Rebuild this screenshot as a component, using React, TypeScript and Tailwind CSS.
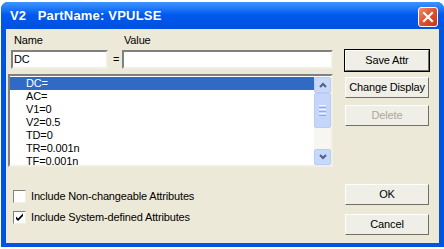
import React from "react";

const rows = ["DC=", "AC=", "V1=0", "V2=0.5", "TD=0", "TR=0.001n", "TF=0.001n"];

function XpButton({ label, isDefault, disabled }: { label: string; isDefault?: boolean; disabled?: boolean }) {
    return (
        <div
            className={
                "w-[86px] h-[23px] flex " +
                (isDefault ? "border border-black" : "border border-transparent")
            }
        >
            <div className="flex-1 flex items-center justify-center border-t border-l border-t-white border-l-white border-r border-b border-r-[#716f64] border-b-[#716f64] bg-[#efeee7]">
                <span className={disabled ? "text-[#aca899]" : "text-black"}>{label}</span>
            </div>
        </div>
    );
}

function Checkbox({ checked, label }: { checked?: boolean; label: string }) {
    return (
        <div className="flex items-center h-[14px]">
            <div className="w-[13px] h-[13px] bg-white border border-t-[#808080] border-l-[#808080] border-r-[#f1efe2] border-b-[#f1efe2] flex items-center justify-center">
                {checked && (
                    <svg width="9" height="9" viewBox="0 0 9 9">
                        <path d="M1 3.5 L3 5.5 L8 0.5 L8 3 L3 8 L1 6 Z" fill="#000" />
                    </svg>
                )}
            </div>
            <span className="ml-[5px]">{label}</span>
        </div>
    );
}

export default function App() {
    return (
        <div className="w-[444px] h-[249px] bg-white pt-[2px] pl-[1px] overflow-hidden">
            <div
                className="w-[443px] h-[245px] flex flex-col rounded-t-[7px] bg-[#0054e3]"
                style={{ fontFamily: '"Liberation Sans", Arial, sans-serif' }}
            >
                {/* タイトルバー */}
                <div className="h-[26px] flex items-center pl-[9px] pr-[6px] rounded-t-[7px] bg-gradient-to-b from-[#3d95ff] via-[#0058ee] to-[#0052e0]">
                    <span className="text-white font-bold text-[13px] tracking-[0.2px] whitespace-pre mt-[1px]">V2   PartName: VPULSE</span>
                    <div className="ml-auto mt-[3px] w-[20px] h-[20px] rounded-[3px] border border-white bg-gradient-to-br from-[#f08a6c] via-[#e0502a] to-[#c8361a] flex items-center justify-center">
                        <svg width="12" height="12" viewBox="0 0 12 12">
                            <path d="M2 2 L10 10 M10 2 L2 10" stroke="#fff" strokeWidth="2.2" strokeLinecap="square" />
                        </svg>
                    </div>
                </div>

                {/* 本体 */}
                <div className="flex-1 mx-[5px] mb-[4px] mt-[1px] bg-[#ece9d8] flex text-[11px] tracking-[-0.15px] text-black">
                    {/* 左列 */}
                    <div className="w-[327px] pl-[2px] pt-[5px] flex flex-col">
                        <div className="flex h-[13px] leading-[13px]">
                            <span className="ml-[6px] w-[110px]">Name</span>
                            <span>Value</span>
                        </div>
                        <div className="flex items-center mt-[3px] h-[19px]">
                            <div className="ml-[3px] w-[97px] h-[19px] bg-white border-2 border-t-[#808080] border-l-[#808080] border-r-[#f1efe2] border-b-[#f1efe2] flex items-center pl-[1px]">
                                DC
                            </div>
                            <span className="ml-[5px] w-[9px]">=</span>
                            <div className="w-[211px] h-[19px] bg-white border-2 border-t-[#808080] border-l-[#808080] border-r-[#f1efe2] border-b-[#f1efe2]" />
                        </div>

                        {/* リスト */}
                        <div className="mt-[5px] w-[325px] h-[93px] bg-white border-2 border-t-[#808080] border-l-[#808080] border-r-[#f1efe2] border-b-[#f1efe2] flex pt-[1px]">
                            <div className="flex-1 flex flex-col">
                                {rows.map((r, i) => (
                                    <div
                                        key={r}
                                        className={
                                            "h-[13px] leading-[13px] pl-[16px] " +
                                            (i === 0 ? "bg-[#316ac5] text-white" : "")
                                        }
                                    >
                                        {r}
                                    </div>
                                ))}
                            </div>
                            <div className="w-[17px] flex flex-col bg-[#f7f6f0]">
                                <div className="h-[16px] rounded-[2px] border border-[#b8cdf6] bg-[#c8d8fb] flex items-center justify-center">
                                    <svg width="8" height="6" viewBox="0 0 8 6">
                                        <path d="M1 5 L4 2 L7 5" stroke="#4d6185" strokeWidth="2" fill="none" />
                                    </svg>
                                </div>
                                <div className="h-[35px] rounded-[2px] border border-[#b8cdf6] bg-[#c6d6fb] flex flex-col items-center justify-center gap-[1px]">
                                    <div className="w-[7px] h-[1px] bg-[#eef3fe]" />
                                    <div className="w-[7px] h-[1px] bg-[#8caaf0]" />
                                    <div className="w-[7px] h-[1px] bg-[#eef3fe]" />
                                    <div className="w-[7px] h-[1px] bg-[#8caaf0]" />
                                    <div className="w-[7px] h-[1px] bg-[#eef3fe]" />
                                    <div className="w-[7px] h-[1px] bg-[#8caaf0]" />
                                </div>
                                <div className="flex-1" />
                                <div className="h-[16px] rounded-[2px] border border-[#b8cdf6] bg-[#c8d8fb] flex items-center justify-center">
                                    <svg width="8" height="6" viewBox="0 0 8 6">
                                        <path d="M1 1 L4 4 L7 1" stroke="#4d6185" strokeWidth="2" fill="none" />
                                    </svg>
                                </div>
                            </div>
                        </div>

                        {/* チェックボックス */}
                        <div className="mt-[22px] ml-[5px] flex flex-col gap-[7px]">
                            <Checkbox label="Include Non-changeable Attributes" />
                            <Checkbox checked label="Include System-defined Attributes" />
                        </div>
                    </div>

                    {/* 右列 */}
                    <div className="ml-[11px] pt-[20px] flex flex-col">
                        <XpButton label="Save Attr" isDefault />
                        <div className="mt-[4px]">
                            <XpButton label="Change Display" />
                        </div>
                        <div className="mt-[5px]">
                            <XpButton label="Delete" disabled />
                        </div>
                        <div className="mt-[56px]">
                            <XpButton label="OK" />
                        </div>
                        <div className="mt-[7px]">
                            <XpButton label="Cancel" />
                        </div>
                    </div>
                </div>
            </div>
        </div>
    );
}
